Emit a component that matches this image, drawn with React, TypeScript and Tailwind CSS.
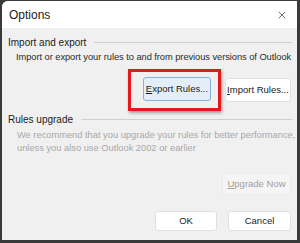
import { X } from 'lucide-react'

function Btn({ label, u, className = '', disabled = false }: { label: string; u?: number; className?: string; disabled?: boolean }) {
  const body =
    u === undefined ? (
      label
    ) : (
      <>
        {label.slice(0, u)}
        <span className="underline underline-offset-1">{label.slice(u, u + 1)}</span>
        {label.slice(u + 1)}
      </>
    )
  return (
    <button
      className={
        'flex shrink-0 items-center justify-center whitespace-nowrap rounded-[3px] border text-[9.5px] ' +
        (disabled ? 'border-[#ebebeb] bg-[#f5f5f5] text-[#a0a0a0] ' : 'border-[#e0e0e0] bg-white text-[#1b1b1b] ') +
        className
      }
    >
      {body}
    </button>
  )
}

function Heading({ title }: { title: string }) {
  return (
    <div className="flex items-center gap-[8px]">
      <span className="text-[10px] leading-[13px] text-[#1b1b1b]">{title}</span>
      <div className="h-px flex-1 bg-[#cfcfcf]" />
    </div>
  )
}

export default function App() {
  return (
    <div
      className="h-[243px] w-[300px] overflow-hidden bg-[#3a3a3a] pb-[3px] pl-[2px] pr-[3px] pt-px"
      style={{ fontFamily: '"Liberation Sans", Arial, sans-serif' }}
    >
      <div className="flex h-full flex-col overflow-hidden rounded-tl-[6px] bg-[#f0f0f0]">
        <div className="flex h-[27px] shrink-0 items-center justify-between bg-white pl-[7px] pr-[9px]">
          <span className="text-[12px] text-[#1b1b1b]">Options</span>
          <X className="h-[12px] w-[12px] text-[#333]" strokeWidth={1.4} />
        </div>
        <div className="flex flex-1 flex-col pl-[6px] pr-[5px] pt-[8px]">
          <Heading title="Import and export" />
          <p className="mt-[2px] whitespace-nowrap pl-[8px] text-[9.3px] leading-[13px] tracking-[-0.05px] text-[#2a2a2a]">
            Import or export your rules to and from previous versions of Outlook
          </p>
          <div className="mt-[5px] flex items-center justify-end gap-[4px] pr-px">
            <div className="border-[3px] border-[#e3191b] pb-[7px] pl-[12px] pr-[7px] pt-[5px] shadow-[1px_2px_3px_rgba(0,0,0,0.35)]">
              <Btn label="Export Rules..." u={0} className="h-[24px] w-[68px] !border-[#7eb4e0] !bg-[#e4eef8]" />
            </div>
            <Btn label="Import Rules..." u={0} className="h-[24px] w-[66px]" />
          </div>
          <div className="mt-[2px]">
            <Heading title="Rules upgrade" />
          </div>
          <p className="mt-[3px] whitespace-nowrap pl-[9px] text-[9.3px] leading-[13px] text-[#a8a8a8]">
            We recommend that you upgrade your rules for better performance,
            <br />
            unless you also use Outlook 2002 or earlier
          </p>
          <div className="mt-[18px] flex justify-end pr-px">
            <Btn label="Upgrade Now" u={0} disabled className="h-[22px] w-[69px]" />
          </div>
          <div className="mt-[16px] flex justify-end gap-[11px] pr-px">
            <Btn label="OK" className="h-[20px] w-[62px]" />
            <Btn label="Cancel" className="h-[20px] w-[63px]" />
          </div>
        </div>
      </div>
    </div>
  )
}
